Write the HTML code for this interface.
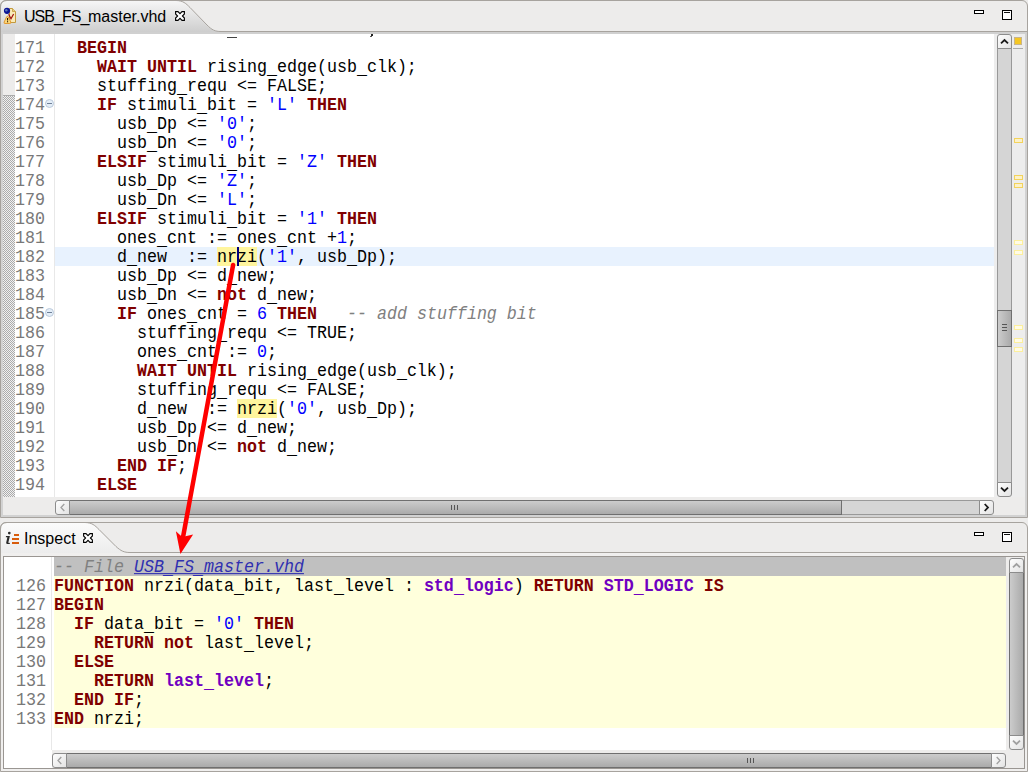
<!DOCTYPE html>
<html><head><meta charset="utf-8"><style>
*{margin:0;padding:0;box-sizing:border-box}
html,body{width:1028px;height:772px;overflow:hidden;background:#edeceb}
body{position:relative;font-family:"Liberation Sans",sans-serif}
.a{position:absolute}
.code,.ln{position:absolute;font-family:"Liberation Mono",monospace;font-size:16.667px;line-height:19px;height:19px;white-space:pre;color:#000;transform:scaleY(1.09);transform-origin:0 3px}
.ln{color:#787878;text-align:right}
.k{color:#7f0000;font-weight:bold}
.s{color:#0000ff}
.c{color:#808080;font-style:italic}
.t{color:#7000c0;font-weight:bold}
.hl{}
.u{position:relative;top:2px}
.tabt{position:absolute;font-family:"Liberation Sans",sans-serif;font-size:16px;color:#000;white-space:pre}
</style></head><body>
<div class="a" style="left:0;top:0;width:1028px;height:518px;background:#edeceb;border:1px solid #a7a39e;border-radius:6px 6px 0 0"></div>
<svg class="a" style="left:0;top:0" width="1028" height="35">
<defs><linearGradient id="tg" x1="0" y1="0" x2="0" y2="1"><stop offset="0" stop-color="#f6f6f6"/><stop offset="1" stop-color="#cbcbcb"/></linearGradient></defs>
<path d="M1 34 L1 7 Q1 1 7 1 L176 1 C183 1 186 4 190 8 L207 25.5 C212 30.5 215 31.5 221 31.5 L1027 31.5 L1027 34 Z" fill="url(#tg)"/>
<path d="M0.5 34 L0.5 7 Q0.5 0.5 7 0.5 L176 0.5 C183 0.5 186 3.5 190 7.5 L207 25 C212 30 215 31.5 221 31.5 L1027 31.5" fill="none" stroke="#a7a39e" stroke-width="1"/>
<rect x="1" y="32" width="1026" height="2" fill="#d0d0d0"/>
</svg>
<div class="a" style="left:994px;top:34px;width:31px;height:481px;background:#ededed"></div>
<div class="a" style="left:1px;top:497px;width:1026px;height:18px;background:#edeceb"></div>
<div class="a" style="left:1025px;top:34px;width:2px;height:483px;background:#d2d2d2"></div>
<div class="a" style="left:1px;top:515px;width:1026px;height:2px;background:#d2d2d2"></div>
<div class="a" style="left:1px;top:34px;width:2px;height:483px;background:#d2d2d2"></div>
<div class="a" style="left:3px;top:34px;width:991px;height:463px;background:#fff"></div>
<div class="a" style="left:3px;top:34px;width:12px;height:463px;background:#edeceb"></div>
<div class="a" style="left:3px;top:95px;width:12px;height:1px;background:#ababab"></div>
<div class="a" style="left:3px;top:96px;width:12px;height:401px;background-color:#f0f0f0;background-image:linear-gradient(45deg,#ababab 25%,transparent 25%,transparent 75%,#ababab 75%),linear-gradient(45deg,#ababab 25%,transparent 25%,transparent 75%,#ababab 75%);background-size:2px 2px;background-position:0 0,1px 1px"></div>
<div class="a" style="left:54px;top:34px;width:1px;height:463px;background:#e8e8e8"></div>
<div class="a" style="left:55px;top:247px;width:939px;height:19px;background:#e8f2fe"></div>
<div class="a" style="left:217px;top:247px;width:40px;height:19px;background:#fff59d"></div>
<div class="a" style="left:237px;top:399px;width:40px;height:19px;background:#fff59d"></div>
<svg class="a" style="left:44px;top:98px" width="11" height="11"><circle cx="5.5" cy="5.5" r="4" fill="#e4eef8" stroke="#bccadb" stroke-width="1"/><line x1="3" y1="5.5" x2="8" y2="5.5" stroke="#6f8098" stroke-width="1"/></svg>
<svg class="a" style="left:44px;top:307px" width="11" height="11"><circle cx="5.5" cy="5.5" r="4" fill="#e4eef8" stroke="#bccadb" stroke-width="1"/><line x1="3" y1="5.5" x2="8" y2="5.5" stroke="#6f8098" stroke-width="1"/></svg>
<div class="a" style="left:3px;top:34px;width:991px;height:463px;overflow:hidden">
<div class="a" style="left:-3px;top:-34px;width:1028px;height:772px">
<div class="ln" style="left:0;width:45px;top:38px">171</div>
<div class="ln" style="left:0;width:45px;top:57px">172</div>
<div class="ln" style="left:0;width:45px;top:76px">173</div>
<div class="ln" style="left:0;width:45px;top:95px">174</div>
<div class="ln" style="left:0;width:45px;top:114px">175</div>
<div class="ln" style="left:0;width:45px;top:133px">176</div>
<div class="ln" style="left:0;width:45px;top:152px">177</div>
<div class="ln" style="left:0;width:45px;top:171px">178</div>
<div class="ln" style="left:0;width:45px;top:190px">179</div>
<div class="ln" style="left:0;width:45px;top:209px">180</div>
<div class="ln" style="left:0;width:45px;top:228px">181</div>
<div class="ln" style="left:0;width:45px;top:247px">182</div>
<div class="ln" style="left:0;width:45px;top:266px">183</div>
<div class="ln" style="left:0;width:45px;top:285px">184</div>
<div class="ln" style="left:0;width:45px;top:304px">185</div>
<div class="ln" style="left:0;width:45px;top:323px">186</div>
<div class="ln" style="left:0;width:45px;top:342px">187</div>
<div class="ln" style="left:0;width:45px;top:361px">188</div>
<div class="ln" style="left:0;width:45px;top:380px">189</div>
<div class="ln" style="left:0;width:45px;top:399px">190</div>
<div class="ln" style="left:0;width:45px;top:418px">191</div>
<div class="ln" style="left:0;width:45px;top:437px">192</div>
<div class="ln" style="left:0;width:45px;top:456px">193</div>
<div class="ln" style="left:0;width:45px;top:475px">194</div>
<div class="code" style="left:57px;top:38px">  <span class="k">BEGIN</span></div>
<div class="code" style="left:57px;top:57px">    <span class="k">WAIT UNTIL</span> rising<span class="u">_</span>edge(usb<span class="u">_</span>clk);</div>
<div class="code" style="left:57px;top:76px">    stuffing<span class="u">_</span>requ &lt;= FALSE;</div>
<div class="code" style="left:57px;top:95px">    <span class="k">IF</span> stimuli<span class="u">_</span>bit = <span class="s">&#x27;L&#x27;</span> <span class="k">THEN</span></div>
<div class="code" style="left:57px;top:114px">      usb<span class="u">_</span>Dp &lt;= <span class="s">&#x27;0&#x27;</span>;</div>
<div class="code" style="left:57px;top:133px">      usb<span class="u">_</span>Dn &lt;= <span class="s">&#x27;0&#x27;</span>;</div>
<div class="code" style="left:57px;top:152px">    <span class="k">ELSIF</span> stimuli<span class="u">_</span>bit = <span class="s">&#x27;Z&#x27;</span> <span class="k">THEN</span></div>
<div class="code" style="left:57px;top:171px">      usb<span class="u">_</span>Dp &lt;= <span class="s">&#x27;Z&#x27;</span>;</div>
<div class="code" style="left:57px;top:190px">      usb<span class="u">_</span>Dn &lt;= <span class="s">&#x27;L&#x27;</span>;</div>
<div class="code" style="left:57px;top:209px">    <span class="k">ELSIF</span> stimuli<span class="u">_</span>bit = <span class="s">&#x27;1&#x27;</span> <span class="k">THEN</span></div>
<div class="code" style="left:57px;top:228px">      ones<span class="u">_</span>cnt := ones<span class="u">_</span>cnt +<span class="s">1</span>;</div>
<div class="code" style="left:57px;top:247px">      d<span class="u">_</span>new  := <span class="hl">nrzi</span>(<span class="s">&#x27;1&#x27;</span>, usb<span class="u">_</span>Dp);</div>
<div class="code" style="left:57px;top:266px">      usb<span class="u">_</span>Dp &lt;= d<span class="u">_</span>new;</div>
<div class="code" style="left:57px;top:285px">      usb<span class="u">_</span>Dn &lt;= <span class="k">not</span> d<span class="u">_</span>new;</div>
<div class="code" style="left:57px;top:304px">      <span class="k">IF</span> ones<span class="u">_</span>cnt = <span class="s">6</span> <span class="k">THEN</span>   <span class="c">-- add stuffing bit</span></div>
<div class="code" style="left:57px;top:323px">        stuffing<span class="u">_</span>requ &lt;= TRUE;</div>
<div class="code" style="left:57px;top:342px">        ones<span class="u">_</span>cnt := <span class="s">0</span>;</div>
<div class="code" style="left:57px;top:361px">        <span class="k">WAIT UNTIL</span> rising<span class="u">_</span>edge(usb<span class="u">_</span>clk);</div>
<div class="code" style="left:57px;top:380px">        stuffing<span class="u">_</span>requ &lt;= FALSE;</div>
<div class="code" style="left:57px;top:399px">        d<span class="u">_</span>new  := <span class="hl">nrzi</span>(<span class="s">&#x27;0&#x27;</span>, usb<span class="u">_</span>Dp);</div>
<div class="code" style="left:57px;top:418px">        usb<span class="u">_</span>Dp &lt;= d<span class="u">_</span>new;</div>
<div class="code" style="left:57px;top:437px">        usb<span class="u">_</span>Dn &lt;= <span class="k">not</span> d<span class="u">_</span>new;</div>
<div class="code" style="left:57px;top:456px">      <span class="k">END IF</span>;</div>
<div class="code" style="left:57px;top:475px">    <span class="k">ELSE</span></div>
<div class="a" style="left:227px;top:37px;width:10px;height:1px;background:#444"></div>
<div class="a" style="left:371px;top:34px;width:2px;height:2px;background:#222"></div><div class="a" style="left:370px;top:36px;width:2px;height:1px;background:#555"></div>
</div></div>
<div class="a" style="left:237px;top:247px;width:2px;height:19px;background:#000080"></div>
<svg class="a" style="left:997px;top:34px" width="15" height="463">
<defs><linearGradient id="btnv" x1="0" y1="0" x2="1" y2="1"><stop offset="0" stop-color="#ffffff"/><stop offset="1" stop-color="#e2e2e2"/></linearGradient><linearGradient id="thv" x1="0" y1="0" x2="1" y2="0"><stop offset="0" stop-color="#cdcdcd"/><stop offset="1" stop-color="#a9a9a9"/></linearGradient></defs>
<rect x="0.5" y="7" width="14" height="449" fill="#d5d5d5" stroke="#999" stroke-width="1"/>
<rect x="0.5" y="276.5" width="14" height="36" fill="url(#thv)" stroke="#6f6f6f" stroke-width="1"/>
<path d="M0.5 14.5 L0.5 3 Q0.5 0.5 3 0.5 L12 0.5 Q14.5 0.5 14.5 3 L14.5 14.5 Z" fill="url(#btnv)" stroke="#8c8c8c" stroke-width="1"/>
<path d="M4 9.3 L7.5 6 L11 9.3" fill="none" stroke="#1a1a1a" stroke-width="1.8"/>
<path d="M0.5 448.5 L0.5 460 Q0.5 462.5 3 462.5 L12 462.5 Q14.5 462.5 14.5 460 L14.5 448.5 Z" fill="url(#btnv)" stroke="#8c8c8c" stroke-width="1"/>
<path d="M4 453.7 L7.5 457 L11 453.7" fill="none" stroke="#1a1a1a" stroke-width="1.8"/>
</svg>
<div class="a" style="left:1002px;top:324px;width:5px;height:1px;background:#555"></div>
<div class="a" style="left:1002px;top:327px;width:5px;height:1px;background:#555"></div>
<div class="a" style="left:1002px;top:330px;width:5px;height:1px;background:#555"></div>
<svg class="a" style="left:55px;top:500px" width="939" height="15">
<defs><linearGradient id="btnh" x1="0" y1="0" x2="1" y2="1"><stop offset="0" stop-color="#ffffff"/><stop offset="1" stop-color="#e2e2e2"/></linearGradient><linearGradient id="thh" x1="0" y1="0" x2="0" y2="1"><stop offset="0" stop-color="#cdcdcd"/><stop offset="1" stop-color="#a9a9a9"/></linearGradient></defs>
<rect x="7" y="0.5" width="925" height="14" fill="#d5d5d5" stroke="#999" stroke-width="1"/>
<rect x="14.5" y="0.5" width="772" height="14" fill="url(#thh)" stroke="#6f6f6f" stroke-width="1"/>
<path d="M14.5 0.5 L3 0.5 Q0.5 0.5 0.5 3 L0.5 12 Q0.5 14.5 3 14.5 L14.5 14.5 Z" fill="url(#btnh)" stroke="#8c8c8c" stroke-width="1"/>
<path d="M9.3 4 L6 7.5 L9.3 11" fill="none" stroke="#a0a0a0" stroke-width="1.3"/>
<path d="M924.5 0.5 L936 0.5 Q938.5 0.5 938.5 3 L938.5 12 Q938.5 14.5 936 14.5 L924.5 14.5 Z" fill="url(#btnh)" stroke="#8c8c8c" stroke-width="1"/>
<path d="M929.7 4 L933 7.5 L929.7 11" fill="none" stroke="#1a1a1a" stroke-width="1.8"/>
</svg>
<div class="a" style="left:451px;top:505px;width:1px;height:5px;background:#555"></div>
<div class="a" style="left:454px;top:505px;width:1px;height:5px;background:#555"></div>
<div class="a" style="left:457px;top:505px;width:1px;height:5px;background:#555"></div>
<div class="a" style="left:1014px;top:37px;width:8px;height:8px;background:#f4c623;border:1px solid #c8b48a"></div>
<div class="a" style="left:1013px;top:48px;width:10px;height:1px;background:#aaa"></div>
<div class="a" style="left:1014px;top:138px;width:9px;height:5px;background:#fcf1c8;border:1px solid #f3d35c"></div>
<div class="a" style="left:1014px;top:175px;width:9px;height:5px;background:#fcf1c8;border:1px solid #f3d35c"></div>
<div class="a" style="left:1014px;top:183px;width:9px;height:5px;background:#fcf1c8;border:1px solid #f3d35c"></div>
<div class="a" style="left:1014px;top:240px;width:9px;height:5px;background:#fffbe6;border:1px solid #fcef9c"></div>
<div class="a" style="left:1014px;top:250px;width:9px;height:5px;background:#fffbe6;border:1px solid #fcef9c"></div>
<div class="a" style="left:1014px;top:325px;width:9px;height:5px;background:#fffbe6;border:1px solid #fcef9c"></div>
<div class="a" style="left:1014px;top:338px;width:9px;height:5px;background:#fffbe6;border:1px solid #fcef9c"></div>
<div class="a" style="left:1014px;top:347px;width:9px;height:5px;background:#fffbe6;border:1px solid #fcef9c"></div>
<div class="a" style="left:974px;top:10px;width:10px;height:4px;border:1.5px solid #000;background:#fff"></div>
<div class="a" style="left:1002px;top:10px;width:10px;height:10px;border:1.5px solid #000;background:#fff"></div><div class="a" style="left:1004px;top:12px;width:6px;height:1px;background:#111"></div>
<div class="tabt" style="left:24px;top:8px;letter-spacing:-0.94px">USB_FS_</div><div class="tabt" style="left:88px;top:8px">master.vhd</div>
<svg class="a" style="left:175px;top:11px" width="10" height="10"><path d="M0.6 0.6 L3 0.6 L5 2.6 L7 0.6 L9.4 0.6 L9.4 3 L7.4 5 L9.4 7 L9.4 9.4 L7 9.4 L5 7.4 L3 9.4 L0.6 9.4 L0.6 7 L2.6 5 L0.6 3 Z" fill="#fff" stroke="#000" stroke-width="1.1" stroke-linejoin="miter"/></svg>
<svg class="a" style="left:0;top:0" width="22" height="26">
<path d="M9.5 8.5 L12.5 8.5 L15.5 11.5 L15.5 22.5 L9.5 22.5 Z" fill="#f9eab8" stroke="#c39a3c" stroke-width="1"/>
<path d="M12.5 8.5 L12.5 11.5 L15.5 11.5" fill="#e8cf80" stroke="#c39a3c" stroke-width="0.8"/>
<circle cx="7" cy="10.8" r="3.1" fill="#0c1496"/>
<circle cx="6.3" cy="10.2" r="1.2" fill="#5a76b8"/>
<path d="M8.6 14.3 L11 18.8 L13.6 14" stroke="#a01010" stroke-width="1.2" fill="none"/>
<path d="M7.4 16.2 Q8 16.2 8.4 17 L10.8 22 Q11.2 23.5 9.8 23.5 L5 23.5 Q3.6 23.5 4.2 22 L6.5 17 Q6.9 16.2 7.4 16.2 Z" fill="#fbd77a" stroke="#e39a32" stroke-width="1"/>
<rect x="7" y="18" width="1.1" height="2.4" fill="#2a1a00"/><rect x="7" y="21.2" width="1.1" height="1.1" fill="#2a1a00"/>
</svg>
<div class="a" style="left:0;top:522px;width:1028px;height:250px;background:#edeceb;border:1px solid #a7a39e;border-radius:6px 6px 0 0"></div>
<svg class="a" style="left:0;top:522px" width="1028" height="36">
<defs><linearGradient id="tg2" x1="0" y1="0" x2="0" y2="1"><stop offset="0" stop-color="#fbfbfb"/><stop offset="1" stop-color="#ebebeb"/></linearGradient></defs>
<path d="M1 34 L1 7 Q1 1 7 1 L85 1 C92 1 95 4 99 8 L116 25 C121 29.5 124 30.5 130 30.5 L1027 30.5 L1027 34 Z" fill="url(#tg2)"/>
<path d="M0.5 34 L0.5 7 Q0.5 0.5 7 0.5 L85 0.5 C92 0.5 95 3.5 99 7.5 L116 24.5 C121 29 124 30.5 130 30.5 L1027 30.5" fill="none" stroke="#a7a39e" stroke-width="1"/>
</svg>
<div class="a" style="left:1px;top:553px;width:1026px;height:218px;background:#f0efee"></div>
<div class="a" style="left:3px;top:556px;width:1022px;height:213px;border:1px solid #9a9692;background:#edeceb"></div>
<div class="a" style="left:4px;top:557px;width:1002px;height:193px;background:#fff"></div>
<div class="a" style="left:4px;top:557px;width:48px;height:211px;background:#fff"></div>
<div class="a" style="left:54px;top:557px;width:952px;height:19px;background:#c0c0c0"></div>
<div class="a" style="left:54px;top:576px;width:952px;height:152px;background:#ffffdc"></div>
<div class="a" style="left:51px;top:557px;width:1px;height:193px;background:#e8e8e8"></div>
<div class="code" style="left:54px;top:557px"><span class="c">-- File </span><span class="c" style="color:#3030b0;text-decoration:underline">USB<span class="u">_</span>FS<span class="u">_</span>master.vhd</span></div>
<div class="ln" style="left:0;width:46px;top:576px">126</div>
<div class="ln" style="left:0;width:46px;top:595px">127</div>
<div class="ln" style="left:0;width:46px;top:614px">128</div>
<div class="ln" style="left:0;width:46px;top:633px">129</div>
<div class="ln" style="left:0;width:46px;top:652px">130</div>
<div class="ln" style="left:0;width:46px;top:671px">131</div>
<div class="ln" style="left:0;width:46px;top:690px">132</div>
<div class="ln" style="left:0;width:46px;top:709px">133</div>
<div class="code" style="left:54px;top:576px"><span class="k">FUNCTION</span> nrzi(data<span class="u">_</span>bit, last<span class="u">_</span>level : <span class="t">std<span class="u">_</span>logic</span>) <span class="k">RETURN</span> <span class="t">STD<span class="u">_</span>LOGIC</span> <span class="k">IS</span></div>
<div class="code" style="left:54px;top:595px"><span class="k">BEGIN</span></div>
<div class="code" style="left:54px;top:614px">  <span class="k">IF</span> data<span class="u">_</span>bit = <span class="s">&#x27;0&#x27;</span> <span class="k">THEN</span></div>
<div class="code" style="left:54px;top:633px">    <span class="k">RETURN</span> <span class="k">not</span> last<span class="u">_</span>level;</div>
<div class="code" style="left:54px;top:652px">  <span class="k">ELSE</span></div>
<div class="code" style="left:54px;top:671px">    <span class="k">RETURN</span> <span class="t">last<span class="u">_</span>level</span>;</div>
<div class="code" style="left:54px;top:690px">  <span class="k">END IF</span>;</div>
<div class="code" style="left:54px;top:709px"><span class="k">END</span> nrzi;</div>
<svg class="a" style="left:1009px;top:558px" width="15" height="192">
<defs><linearGradient id="btnv" x1="0" y1="0" x2="1" y2="1"><stop offset="0" stop-color="#ffffff"/><stop offset="1" stop-color="#e2e2e2"/></linearGradient><linearGradient id="thv" x1="0" y1="0" x2="1" y2="0"><stop offset="0" stop-color="#cdcdcd"/><stop offset="1" stop-color="#a9a9a9"/></linearGradient></defs>
<rect x="0.5" y="7" width="14" height="178" fill="#d5d5d5" stroke="#999" stroke-width="1"/>
<rect x="0.5" y="13.5" width="14" height="164" fill="url(#thv)" stroke="#6f6f6f" stroke-width="1"/>
<path d="M0.5 14.5 L0.5 3 Q0.5 0.5 3 0.5 L12 0.5 Q14.5 0.5 14.5 3 L14.5 14.5 Z" fill="url(#btnv)" stroke="#8c8c8c" stroke-width="1"/>
<path d="M4 9.3 L7.5 6 L11 9.3" fill="none" stroke="#a0a0a0" stroke-width="1.8"/>
<path d="M0.5 177.5 L0.5 189 Q0.5 191.5 3 191.5 L12 191.5 Q14.5 191.5 14.5 189 L14.5 177.5 Z" fill="url(#btnv)" stroke="#8c8c8c" stroke-width="1"/>
<path d="M4 182.7 L7.5 186 L11 182.7" fill="none" stroke="#a0a0a0" stroke-width="1.8"/>
</svg>
<svg class="a" style="left:52px;top:753px" width="954" height="15">
<defs><linearGradient id="btnh" x1="0" y1="0" x2="1" y2="1"><stop offset="0" stop-color="#ffffff"/><stop offset="1" stop-color="#e2e2e2"/></linearGradient><linearGradient id="thh" x1="0" y1="0" x2="0" y2="1"><stop offset="0" stop-color="#cdcdcd"/><stop offset="1" stop-color="#a9a9a9"/></linearGradient></defs>
<rect x="7" y="0.5" width="940" height="14" fill="#d5d5d5" stroke="#999" stroke-width="1"/>
<rect x="14.5" y="0.5" width="925" height="14" fill="url(#thh)" stroke="#6f6f6f" stroke-width="1"/>
<path d="M14.5 0.5 L3 0.5 Q0.5 0.5 0.5 3 L0.5 12 Q0.5 14.5 3 14.5 L14.5 14.5 Z" fill="url(#btnh)" stroke="#8c8c8c" stroke-width="1"/>
<path d="M9.3 4 L6 7.5 L9.3 11" fill="none" stroke="#a0a0a0" stroke-width="1.3"/>
<path d="M939.5 0.5 L951 0.5 Q953.5 0.5 953.5 3 L953.5 12 Q953.5 14.5 951 14.5 L939.5 14.5 Z" fill="url(#btnh)" stroke="#8c8c8c" stroke-width="1"/>
<path d="M944.7 4 L948 7.5 L944.7 11" fill="none" stroke="#a0a0a0" stroke-width="1.3"/>
</svg>
<div class="a" style="left:747px;top:758px;width:1px;height:5px;background:#555"></div>
<div class="a" style="left:750px;top:758px;width:1px;height:5px;background:#555"></div>
<div class="a" style="left:753px;top:758px;width:1px;height:5px;background:#555"></div>
<div class="a" style="left:974px;top:532px;width:10px;height:4px;border:1.5px solid #000;background:#fff"></div>
<div class="a" style="left:1002px;top:532px;width:10px;height:10px;border:1.5px solid #000;background:#fff"></div><div class="a" style="left:1004px;top:534px;width:6px;height:1px;background:#111"></div>
<div class="tabt" style="left:24px;top:530px">Inspect</div>
<svg class="a" style="left:83px;top:533px" width="10" height="10"><path d="M0.6 0.6 L3 0.6 L5 2.6 L7 0.6 L9.4 0.6 L9.4 3 L7.4 5 L9.4 7 L9.4 9.4 L7 9.4 L5 7.4 L3 9.4 L0.6 9.4 L0.6 7 L2.6 5 L0.6 3 Z" fill="#fff" stroke="#000" stroke-width="1.1" stroke-linejoin="miter"/></svg>
<svg class="a" style="left:0;top:526px" width="24" height="24">
<circle cx="9.3" cy="7.1" r="1.35" fill="#2a2a2a"/>
<path d="M6 10 L9.9 10 L8.4 16.2 Q8.3 17 9.1 16.9 L10 16.7 L9.7 18 L7.2 18 Q5.8 18 6.2 16.6 L7.4 11.2 L5.8 11.2 Z" fill="#2a2a2a"/>
<rect x="14" y="8" width="5" height="2" fill="#d85c0c"/><rect x="12" y="12" width="7" height="2" fill="#d85c0c"/><rect x="12" y="16" width="7" height="2" fill="#d85c0c"/>
</svg>
<svg class="a" style="left:0;top:0" width="1028" height="772" viewBox="0 0 1028 772">
<line x1="233.1" y1="265" x2="182.5" y2="540" stroke="#ff0000" stroke-width="4.5" stroke-linecap="round"/>
<path d="M180.4 554 L175.9 531.2 L182.2 537 L193.1 534.4 Z" fill="#ff0000"/>
</svg>
</body></html>
